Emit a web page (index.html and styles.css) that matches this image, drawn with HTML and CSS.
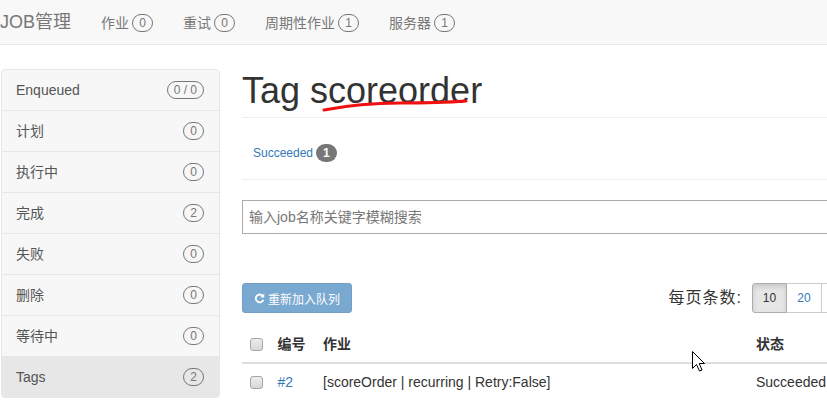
FILE: index.html
```html
<!DOCTYPE html>
<html lang="zh">
<head>
    <meta charset="UTF-8">
    <title>Tag scoreorder - JOB管理</title>
    <link rel="stylesheet" href="styles.css">
</head>
<body>

<div class="navbar">
    <span class="brand">JOB管理</span>
    <ul class="nav">
        <li>作业 <span class="badge">0</span></li>
        <li>重试 <span class="badge">0</span></li>
        <li>周期性作业 <span class="badge">1</span></li>
        <li>服务器 <span class="badge">1</span></li>
    </ul>
</div>

<div class="wrap">
    <ul class="list-group">
        <li class="item">Enqueued <span class="badge">0 / 0</span></li>
        <li class="item">计划 <span class="badge">0</span></li>
        <li class="item">执行中 <span class="badge">0</span></li>
        <li class="item">完成 <span class="badge">2</span></li>
        <li class="item">失败 <span class="badge">0</span></li>
        <li class="item">删除 <span class="badge">0</span></li>
        <li class="item">等待中 <span class="badge">0</span></li>
        <li class="item active">Tags <span class="badge">2</span></li>
    </ul>

    <div class="main">
        <h1 class="page-header">Tag scoreorder</h1>

        <div class="states">
            <a href="#">Succeeded</a><span class="badge-dark">1</span>
        </div>

        <input class="search" type="text" placeholder="输入job名称关键字模糊搜索">

        <div class="toolbar">
            <button class="btn-requeue">
                <svg class="icon" viewBox="0 0 12 12" width="11" height="11">
                    <path d="M9.6 3.2 A4.3 4.3 0 1 0 10.3 7.4" fill="none" stroke="#fff" stroke-width="2"/>
                    <path d="M11.2 0.6 L11.2 5 L6.8 5 Z" fill="#fff"/>
                </svg>重新加入队列
            </button>
            <div class="pager">
                <span class="pager-label">每页条数:</span>
                <div class="btn-group">
                    <span class="pbtn active">10</span>
                    <span class="pbtn">20</span>
                    <span class="pbtn">50</span>
                    <span class="pbtn">100</span>
                    <span class="pbtn">500</span>
                </div>
            </div>
        </div>

        <table>
            <thead>
                <tr>
                    <th class="col-check"><span class="check"></span></th>
                    <th class="col-id">编号</th>
                    <th class="col-job">作业</th>
                    <th>状态</th>
                </tr>
            </thead>
            <tbody>
                <tr>
                    <td class="col-check"><span class="check"></span></td>
                    <td><a href="#">#2</a></td>
                    <td>[scoreOrder | recurring | Retry:False]</td>
                    <td>Succeeded</td>
                </tr>
            </tbody>
        </table>
    </div>
</div>

<svg class="overlay" width="827" height="407" viewBox="0 0 827 407">
    <path d="M324 110 Q 360 103 400 103 T 466 101" fill="none" stroke="#f01010" stroke-width="3" stroke-linecap="round"/>
    <path d="M692.5 351.5 L692.5 368.5 L696.5 364.5 L699.5 371 L702 370 L699.2 363.5 L704.5 363.5 Z" fill="#fff" stroke="#000" stroke-width="1"/>
</svg>

</body>
</html>
```

FILE: styles.css
```css
body { margin: 0; font-family: "Liberation Sans", "Noto Sans CJK SC", sans-serif; font-size: 14px; line-height: 20px; color: #333; overflow: hidden; position: relative; width: 827px; height: 407px; }
a { color: #337ab7; text-decoration: none; }
ul { list-style: none; margin: 0; padding: 0; }

.navbar { height: 44px; background-color: #f8f8f8; border-bottom: 1px solid #e7e7e7; display: flex; align-items: center; }
.brand { font-size: 18px; color: #777; margin-right: 15px; padding-left: 0; line-height: 20px; }
.nav { display: flex; }
.nav li { color: #777; padding: 0 15px; display: flex; align-items: center; gap: 3px; padding-top: 2px; }

.badge { display: inline-block; border: 1px solid #777; color: #777; border-radius: 10px; font-size: 12px; line-height: 14px; padding: 1px 6px; min-width: 7px; text-align: center; }

.wrap { display: flex; align-items: flex-start; padding-top: 24px; gap: 22px; }

.list-group { width: 219px; margin-left: 1px; flex-shrink: 0; }
.item { display: flex; justify-content: space-between; align-items: center; padding: 10px 15px 10px 14px; background-color: #f7f7f7; border: 1px solid #e7e7e7; margin-bottom: -1px; color: #555; height: 20px; }
.item:first-child { border-radius: 4px 4px 0 0; }
.item:last-child { border-radius: 0 0 4px 4px; margin-bottom: 0; }
.item.active { background-color: #e7e7e7; color: #555; }

.main { width: 696px; flex-shrink: 0; }
.page-header { font-size: 36px; font-weight: 500; line-height: 40px; margin: 2px 0 0; padding-bottom: 6px; border-bottom: 1px solid #eee; color: #333; }

.states { padding: 25px 0 16px 11px; border-bottom: 1px solid #eee; font-size: 12px; display: flex; align-items: center; height: 20px; }
.badge-dark { display: inline-block; background-color: #777; color: #fff; font-weight: bold; border-radius: 10px; font-size: 12px; line-height: 12px; padding: 3px 7px; margin-left: 3px; }

.search { display: block; box-sizing: border-box; width: 100%; height: 34px; margin-top: 20px; border: 1px solid #aaa; padding: 0 6px; font-family: inherit; font-size: 14px; color: #555; outline: none; }
.search::placeholder { color: #777; }

.toolbar { display: flex; justify-content: space-between; align-items: center; margin-top: 49px; height: 30px; }
.btn-requeue { display: flex; align-items: center; gap: 2px; height: 30px; padding: 0 11px; border: 1px solid #2e6da4; border-radius: 3px; background-color: #337ab7; opacity: .65; color: #fff; font-family: inherit; font-size: 12px; }
.icon { margin-right: 1px; }

.pager { display: flex; align-items: center; gap: 11px; }
.pager-label { font-size: 16px; letter-spacing: 1px; color: #333; }
.btn-group { display: flex; }
.pbtn { display: inline-block; box-sizing: border-box; height: 30px; line-height: 28px; padding: 0 10px; border: 1px solid #ccc; margin-left: -1px; background-color: #fff; color: #337ab7; font-size: 12px; }
.pbtn:first-child { border-radius: 3px 0 0 3px; }
.pbtn:last-child { border-radius: 0 3px 3px 0; }
.pbtn.active { background-color: #e6e6e6; border-color: #adadad; color: #333; box-shadow: inset 0 3px 5px rgba(0,0,0,.125); position: relative; }

table { border-collapse: collapse; width: 100%; margin-top: 13px; table-layout: fixed; }
th, td { padding: 8px; text-align: left; vertical-align: middle; line-height: 20px; }
th { font-weight: bold; border-bottom: 2px solid #ddd; }
.col-check { width: 11.5px; }
.col-id { width: 29.5px; }
.col-job { width: 417px; }
.check { display: block; width: 13px; height: 13px; box-sizing: border-box; border: 1px solid #a6a6a6; border-radius: 3px; background: linear-gradient(#ececec, #d8d8d8); }

.overlay { position: absolute; left: 0; top: 0; pointer-events: none; }
```
